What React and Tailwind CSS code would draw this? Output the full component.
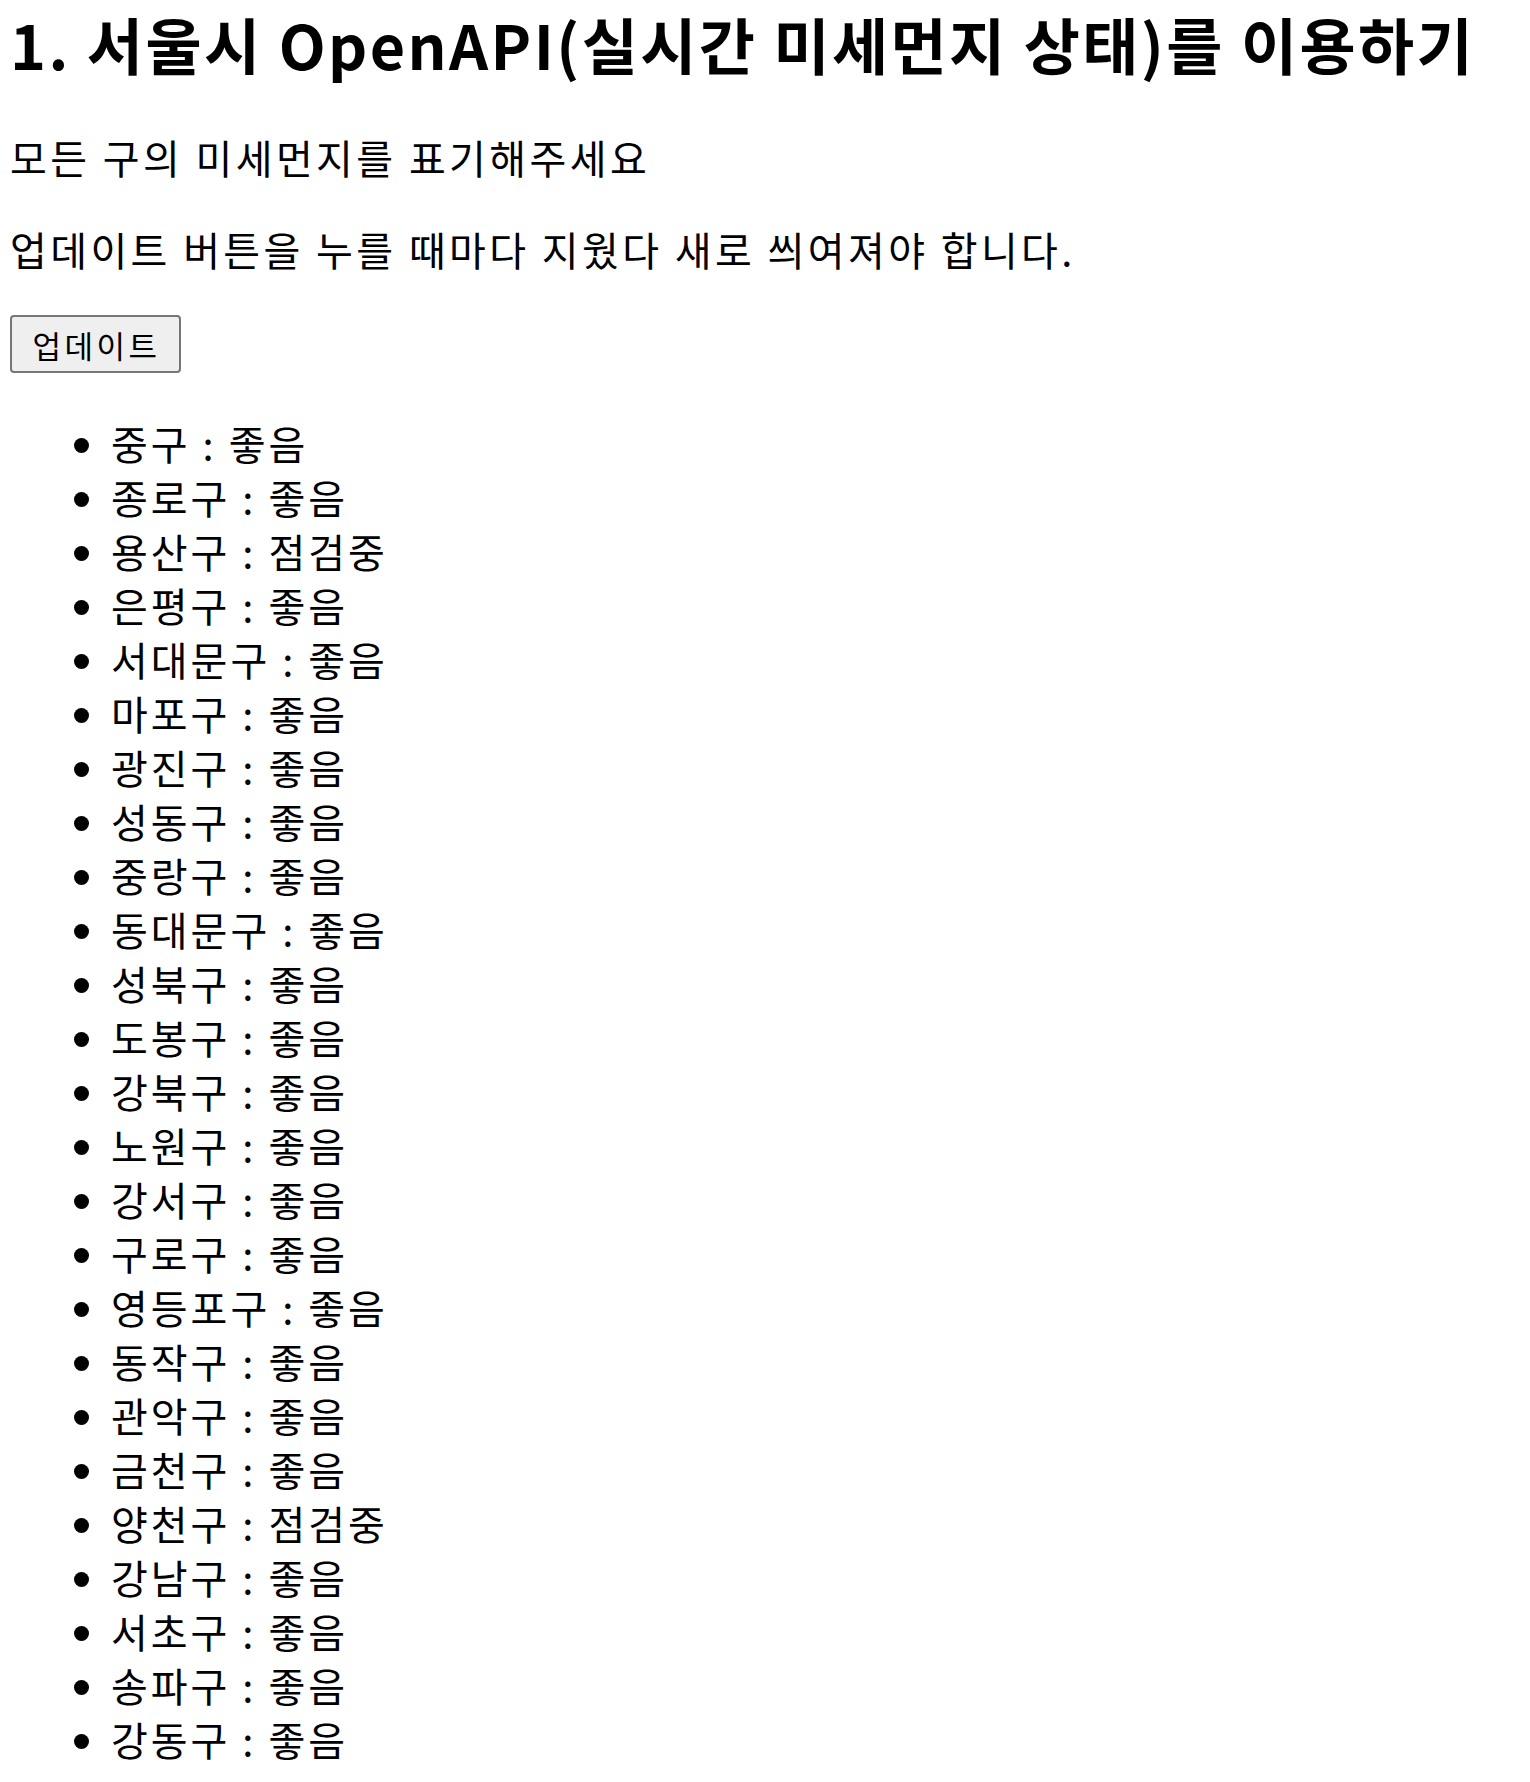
const districts = [
  ['중구', '좋음'],
  ['종로구', '좋음'],
  ['용산구', '점검중'],
  ['은평구', '좋음'],
  ['서대문구', '좋음'],
  ['마포구', '좋음'],
  ['광진구', '좋음'],
  ['성동구', '좋음'],
  ['중랑구', '좋음'],
  ['동대문구', '좋음'],
  ['성북구', '좋음'],
  ['도봉구', '좋음'],
  ['강북구', '좋음'],
  ['노원구', '좋음'],
  ['강서구', '좋음'],
  ['구로구', '좋음'],
  ['영등포구', '좋음'],
  ['동작구', '좋음'],
  ['관악구', '좋음'],
  ['금천구', '좋음'],
  ['양천구', '점검중'],
  ['강남구', '좋음'],
  ['서초구', '좋음'],
  ['송파구', '좋음'],
  ['강동구', '좋음'],
];

const App = () => {
  return (
    <div className="min-h-screen bg-white pl-[10px] text-black font-['Noto_Sans_CJK_KR','Noto_Sans',sans-serif]">
      <h1 className="m-0 text-[61px] font-bold leading-[88px] tracking-[2.4px]">
        1. 서울시 OpenAPI(실시간 미세먼지 상태)를 이용하기
      </h1>

      <p className="mt-[42px] text-[40px] leading-[54px] tracking-[3.4px]">모든 구의 미세먼지를 표기해주세요</p>

      <p className="mt-[38px] text-[40px] leading-[54px] tracking-[3.4px]">
        업데이트 버튼을 누를 때마다 지웠다 새로 씌여져야 합니다.
      </p>

      <button
        type="button"
        className="mt-[39px] flex h-[58px] w-[171px] items-center justify-center rounded-[4px] border-2 border-[#767676] bg-[#efefef] pl-[2px] text-[31px] leading-none tracking-[3.5px]"
      >
        업데이트
      </button>

      <ul className="mt-[43px] list-disc pl-[101px] text-[40px] leading-[54px] tracking-[3px]">
        {districts.map(([name, status]) => (
          <li key={name}>
            {name} : {status}
          </li>
        ))}
      </ul>
    </div>
  );
};

export default App;
